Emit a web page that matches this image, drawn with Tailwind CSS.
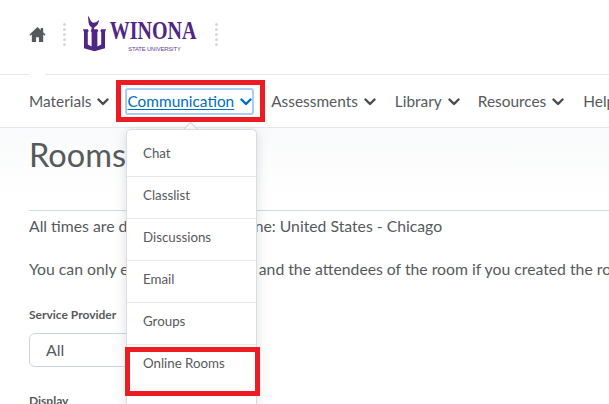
<!DOCTYPE html>
<html lang="en">
<head>
  <meta charset="UTF-8" />
  <title>Rooms</title>
  <script src="https://cdn.jsdelivr.net/npm/@tailwindcss/browser@4"></script>
</head>
<body class="relative w-[609px] h-[404px] overflow-hidden bg-white font-['Lato',sans-serif] text-[#494c4e]">
  <!-- header -->
  <header class="flex items-center h-[68px] pb-[6px] pl-[29px] border-b border-[#e6e8ef] box-content">
    <svg class="w-[17px] h-[17px] text-[#565a5c]" viewBox="0 0 18 18" fill="currentColor"><path d="M9 1 0.5 9l1 1.2L3 9v8h4.5v-5h3v5H15V9l1.5 1.2 1-1.2-2.5-2.4V2h-2.5v2.2z"/></svg>
    <div class="ml-[17px] mr-[17px] flex flex-col gap-[2px]">
      <i class="block w-[3px] h-[3px] rounded-full bg-[#d3d9e3]"></i><i class="block w-[3px] h-[3px] rounded-full bg-[#d3d9e3]"></i><i class="block w-[3px] h-[3px] rounded-full bg-[#d3d9e3]"></i><i class="block w-[3px] h-[3px] rounded-full bg-[#d3d9e3]"></i><i class="block w-[3px] h-[3px] rounded-full bg-[#d3d9e3]"></i>
    </div>
    <svg class="w-[23px] h-[37px] mb-[2px]" viewBox="0 0 24 37" fill="#4f2683"><path d="M5 0c3 3 2 5 5 7 3 1 5-1 7-3-1 4-2 7-5 8l-1 3h-2l0-3C5 10 6 5 5 0z"/><path d="M0 14h5l1 2-1 1v13l4 2V17l-1-1 1-2h6l1 2-1 1v15l4-2V17l-1-1 1-2h5l-1 3v17l-11 3-11-3V17z"/></svg>
    <div class="ml-[4px] mt-[3px] w-[87px] flex flex-col items-center">
      <span class="font-['Liberation_Serif',serif] font-bold text-[#4f2683] text-[25px] leading-[24px] scale-x-[0.8]">WINONA</span>
      <span class="font-['Liberation_Sans',sans-serif] text-[#5f3a97] text-[5.8px] leading-[8px] mt-[2px] ml-[2px] tracking-[-0.1px]">STATE UNIVERSITY</span>
    </div>
    <div class="ml-[18px] flex flex-col gap-[2px]">
      <i class="block w-[3px] h-[3px] rounded-full bg-[#d3d9e3]"></i><i class="block w-[3px] h-[3px] rounded-full bg-[#d3d9e3]"></i><i class="block w-[3px] h-[3px] rounded-full bg-[#d3d9e3]"></i><i class="block w-[3px] h-[3px] rounded-full bg-[#d3d9e3]"></i><i class="block w-[3px] h-[3px] rounded-full bg-[#d3d9e3]"></i>
    </div>
  </header>
  <div class="absolute left-[29px] top-[74px] w-[16px] h-[1px] bg-white"></div>

  <!-- nav -->
  <nav class="flex items-center h-[51px] pt-[1px] pl-[29px] border-b border-[#e6e8ef] box-content text-[15.4px] whitespace-nowrap text-[#565a5c]">
    <span class="flex items-center gap-[6px]">Materials
      <svg class="w-[12px] h-[8px] mt-[1px]" viewBox="0 0 12 8" fill="none" stroke="#494c4e" stroke-width="2.4" stroke-linecap="round" stroke-linejoin="round"><path d="M1.5 1.5 6 6 10.5 1.5"/></svg>
    </span>
    <span class="flex items-center gap-[6px] ml-[18px] text-[#006fbf] outline-2 outline-[#a9cdf5] rounded-[1px]">
      <span class="underline underline-offset-2">Communication</span>
      <svg class="w-[12px] h-[8px] mt-[1px]" viewBox="0 0 12 8" fill="none" stroke="#006fbf" stroke-width="2.4" stroke-linecap="round" stroke-linejoin="round"><path d="M1.5 1.5 6 6 10.5 1.5"/></svg>
    </span>
    <span class="flex items-center gap-[6px] ml-[19px]">Assessments
      <svg class="w-[12px] h-[8px] mt-[1px]" viewBox="0 0 12 8" fill="none" stroke="#494c4e" stroke-width="2.4" stroke-linecap="round" stroke-linejoin="round"><path d="M1.5 1.5 6 6 10.5 1.5"/></svg>
    </span>
    <span class="flex items-center gap-[6px] ml-[19px]">Library
      <svg class="w-[12px] h-[8px] mt-[1px]" viewBox="0 0 12 8" fill="none" stroke="#494c4e" stroke-width="2.4" stroke-linecap="round" stroke-linejoin="round"><path d="M1.5 1.5 6 6 10.5 1.5"/></svg>
    </span>
    <span class="flex items-center gap-[6px] ml-[18px]">Resources
      <svg class="w-[12px] h-[8px] mt-[1px]" viewBox="0 0 12 8" fill="none" stroke="#494c4e" stroke-width="2.4" stroke-linecap="round" stroke-linejoin="round"><path d="M1.5 1.5 6 6 10.5 1.5"/></svg>
    </span>
    <span class="ml-[19px]">Help</span>
  </nav>

  <!-- page content -->
  <main class="pl-[29px] h-[277px] bg-gradient-to-b from-[#f9fafb] to-white to-[25%] whitespace-nowrap">
    <h1 class="text-[32.5px] leading-[42px] font-normal pt-[6px] box-content text-[#565a5c]">Rooms</h1>
    <div class="mt-[34px] border-t border-[#d3d9e3] pt-[4px] text-[15.75px] leading-[22px] text-[#565a5c]">
      <p>All times are displayed in time zone: United States - Chicago</p>
      <p class="mt-[21px]">You can only edit the description and the attendees of the room if you created the room.</p>
    </div>
    <p class="mt-[27px] text-[12px] font-bold leading-[16px] text-[#565a5c]">Service Provider</p>
    <div class="mt-[10px] w-[200px] h-[34px] pl-[16px] flex items-center border border-[#cdd5dc] rounded-[6px] bg-white text-[16px] text-[#565a5c]">All</div>
    <p class="mt-[26px] text-[12px] font-bold leading-[16px] text-[#565a5c]">Display</p>
  </main>

  <!-- communication dropdown -->
  <div class="absolute left-[185px] top-[124px] w-[11px] h-[11px] rotate-45 bg-white border-l border-t border-[#d3d9e3]"></div>
  <ul class="absolute left-[126px] top-[129px] w-[131px] h-[280px] bg-white border border-[#d9dce4] rounded-[5px] shadow-[0_2px_12px_rgba(86,90,92,0.2)] text-[13.3px] text-[#565a5c]">
    <li class="h-[47px] pl-[16px] pt-[15px] leading-[16px] border-b border-[#e6e8ef]">Chat</li>
    <li class="h-[42px] pl-[16px] pt-[10px] leading-[16px] border-b border-[#e6e8ef]">Classlist</li>
    <li class="h-[42px] pl-[16px] pt-[10px] leading-[16px] border-b border-[#e6e8ef]">Discussions</li>
    <li class="h-[42px] pl-[16px] pt-[10px] leading-[16px] border-b border-[#e6e8ef]">Email</li>
    <li class="h-[42px] pl-[16px] pt-[10px] leading-[16px] border-b border-[#e6e8ef]">Groups</li>
    <li class="h-[42px] pl-[16px] pt-[10px] leading-[16px]">Online Rooms</li>
  </ul>

  <!-- red highlight boxes -->
  <div class="absolute left-[116px] top-[80px] w-[149px] h-[42px] border-[5px] border-[#ed1c24]"></div>
  <div class="absolute left-[125px] top-[347px] w-[135px] h-[49px] border-[5px] border-[#ed1c24]"></div>
</body>
</html>
